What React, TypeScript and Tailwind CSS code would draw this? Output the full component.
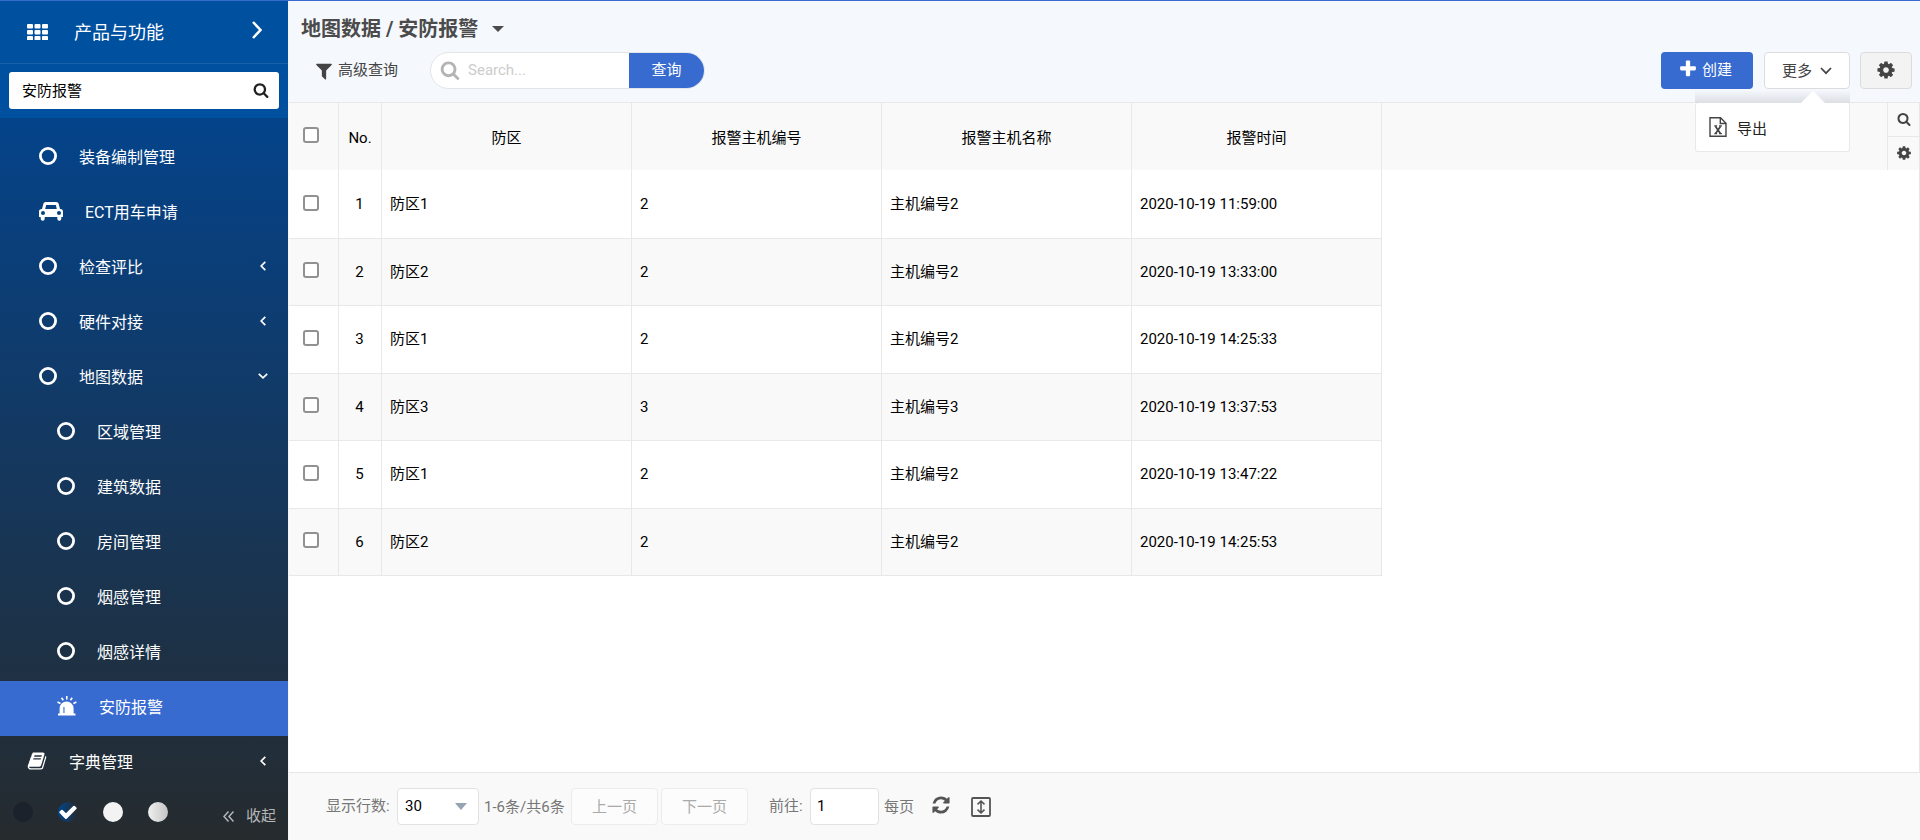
import type { ReactNode } from "react";
import { clsx } from "clsx";

type IconProps = { className?: string };

function Glyph({ d, className }: IconProps & { d: string }) {
  return (
    <svg viewBox="0 0 1792 1792" fill="currentColor" aria-hidden="true" className={className}>
      <path fillRule="evenodd" d={d} />
    </svg>
  );
}

const SEARCH =
  "M1216 832q0-185-131.5-316.5t-316.5-131.5-316.5 131.5-131.5 316.5 131.5 316.5 316.5 131.5 316.5-131.5 131.5-316.5zm512 832q0 52-38 90t-90 38q-54 0-90-38l-343-342q-179 124-399 124-143 0-273.5-55.5t-225-150-150-225-55.5-273.5 55.5-273.5 150-225 225-150 273.5-55.5 273.5 55.5 225 150 150 225 55.5 273.5q0 220-124 399l343 343q37 37 37 90z";
const COG =
  "M1152 896q0-106-75-181t-181-75-181 75-75 181 75 181 181 75 181-75 75-181zm512-109v222q0 12-8 23t-20 13l-185 28q-19 54-39 91 35 50 107 138 10 12 10 25t-9 23q-27 37-99 108t-94 71q-12 0-26-9l-138-108q-44 23-91 38-16 136-29 186-7 28-36 28h-222q-14 0-24.5-8.5t-11.5-21.5l-28-184q-49-16-90-37l-141 107q-10 9-25 9-14 0-25-11-126-114-165-168-7-10-7-23 0-12 8-23 15-21 51-66.5t54-70.5q-27-50-41-99l-183-27q-13-2-21-12.5t-8-23.5v-222q0-12 8-23t19-13l186-28q14-46 39-92-40-57-107-138-10-12-10-24 0-10 9-23 26-36 98.5-107.5t94.5-71.5q13 0 26 10l138 107q44-23 91-38 16-136 29-186 7-28 36-28h222q14 0 24.5 8.5t11.5 21.5l28 184q49 16 90 37l142-107q9-9 24-9 13 0 25 10 129 119 165 170 7 8 7 22 0 12-8 23-15 21-51 66.5t-54 70.5q26 50 41 98l183 28q13 2 21 12.5t8 23.5z";
const REFRESH =
  "M1639 1056q0 5-1 7-64 268-268 434.5t-478 166.5q-146 0-282.5-55t-243.5-157l-129 129q-19 19-45 19t-45-19-19-45v-448q0-26 19-45t45-19h448q26 0 45 19t19 45-19 45l-137 137q71 66 161 102t187 36q134 0 250-65t186-179q11-17 53-117 8-23 30-23h192q13 0 22.5 9.5t9.5 22.5zm25-800v448q0 26-19 45t-45 19h-448q-26 0-45-19t-19-45 19-45l138-138q-148-137-349-137-134 0-250 65t-186 179q-11 17-53 117-8 23-30 23h-199q-13 0-22.5-9.5t-9.5-22.5v-7q65-268 270-434.5t480-166.5q146 0 284 55.5t245 156.5l130-129q19-19 45-19t45 19 19 45z";
const FILTER =
  "M1595 295q17 41-14 70l-493 493v742q0 42-39 59-13 5-25 5-27 0-45-19l-256-256q-19-19-19-45v-486l-493-493q-31-29-14-70 17-39 59-39h1280q42 0 59 39z";
const PLUS =
  "M1600 736v192q0 40-28 68t-68 28h-416v416q0 40-28 68t-68 28h-192q-40 0-68-28t-28-68v-416h-416q-40 0-68-28t-28-68v-192q0-40 28-68t68-28h416v-416q0-40 28-68t68-28h192q40 0 68 28t28 68v416h416q40 0 68 28t28 68z";
const BOOK =
  "M1703 478q40 57 18 129l-275 906q-19 64-76.5 107.5t-122.5 43.5h-923q-77 0-148.5-53.5t-99.5-131.5q-24-67-2-127 0-4 3-27t4-37q1-8-3-21.5t-3-19.5q2-11 8-21t16.5-23.5 16.5-23.5q23-38 45-91.5t30-91.5q3-10 .5-30t-.5-28q3-11 17-28t17-23q21-36 42-92t25-90q1-9-2.5-32t.5-28q4-13 22-30.5t22-22.5q19-26 42.5-84.5t27.5-96.5q1-8-3-25.5t-2-26.5q2-8 9-18t18-23 17-21q8-12 16.5-30.5t15-35 16-36 19.5-32 26.5-23.5 36-11.5 47.5 5.5l-1 3q38-9 51-9h761q74 0 114 56t18 130l-274 906q-36 119-71.5 153.5t-128.5 34.5h-869q-27 0-38 15-11 16-1 43 24 70 144 70h923q29 0 56-15.5t35-41.5l300-987q7-22 5-57 38 15 59 43zm-1064 2q-4 13 2 22.5t20 9.5h608q13 0 25.5-9.5t16.5-22.5l21-64q4-13-2-22.5t-20-9.5h-608q-13 0-25.5 9.5t-16.5 22.5zm-83 256q-4 13 2 22.5t20 9.5h608q13 0 25.5-9.5t16.5-22.5l21-64q4-13-2-22.5t-20-9.5h-608q-13 0-25.5 9.5t-16.5 22.5z";
const CHECK =
  "M1671 566q0 40-28 68l-724 724-136 136q-28 28-68 28t-68-28l-136-136-362-362q-28-28-28-68t28-68l136-136q28-28 68-28t68 28l294 295 656-657q28-28 68-28t68 28l136 136q28 28 28 68z";

function GridIcon() {
  return (
    <svg viewBox="0 0 21 16" fill="currentColor" aria-hidden="true" className="h-4 w-[21px]">
      {[0, 6, 12].map((y) =>
        [0, 7.5, 15].map((x) => <rect key={`${x}-${y}`} x={x} y={y} width="6" height="4.4" rx="1" />)
      )}
    </svg>
  );
}

function RingIcon() {
  return (
    <svg viewBox="0 0 18 18" fill="none" stroke="currentColor" strokeWidth="2.8" aria-hidden="true" className="size-[18px]">
      <circle cx="9" cy="9" r="7.6" />
    </svg>
  );
}

function CarIcon() {
  return (
    <svg viewBox="0 0 24 19" fill="currentColor" aria-hidden="true" className="h-[19px] w-6">
      <path
        fillRule="evenodd"
        d="M6.8 0h10.4c1.3 0 2.2.8 2.5 2l1.3 5h.4C23 7 24 8.2 24 9.6v4.8c0 .4-.2.6-.6.6h-1.1v1.7a2 2 0 0 1-4 0V15H5.7v1.7a2 2 0 0 1-4 0V15H.6c-.4 0-.6-.2-.6-.6V9.6C0 8.2 1 7 2.6 7H3l1.3-5C4.6.8 5.5 0 6.8 0zM6.2 7h11.6l-.9-3.7c-.1-.3-.2-.4-.5-.4H7.6c-.3 0-.4.1-.5.4zM4 9.1a2 2 0 1 0 0 4 2 2 0 0 0 0-4zm16 0a2 2 0 1 0 0 4 2 2 0 0 0 0-4z"
      />
    </svg>
  );
}

function SirenIcon() {
  return (
    <svg viewBox="0 0 20 20" aria-hidden="true" className="size-5">
      <path
        fill="currentColor"
        fillRule="evenodd"
        d="M1 17.5h1.6V12.500a6.900 6.900 0 0 1 14 0v5H18.500V19.500H1zM6.400 17h1.100v-6H6.400z"
      />
      <path
        fill="none"
        stroke="currentColor"
        strokeWidth="1.6"
        d="M.5 6l3 1.500M4.500 1.800l1.800 2.400M9.800 0v3.600M15.200 1.800l-1.800 2.400M19.400 6l-3 1.500"
      />
    </svg>
  );
}

function ExcelIcon() {
  return (
    <svg viewBox="0 0 18 20" fill="none" stroke="currentColor" aria-hidden="true" className="h-5 w-[18px]">
      <path strokeWidth="1.4" d="M1 .8h10.500L17 6.300v12.900H1zM11.300 1v5.500H17" />
      <path strokeWidth="1.7" d="M6.400 9.200l5 7.200M11.600 9.200l-5 7.200" />
      <path strokeWidth="1.1" d="M5.300 8.900h2.800M10.100 8.900h2.800M5.300 16.600h2.800M10.100 16.600h2.800" />
    </svg>
  );
}

function FitHeightIcon() {
  return (
    <svg viewBox="0 0 20 20" fill="none" stroke="currentColor" aria-hidden="true" className="size-5">
      <rect x="1" y="1" width="18" height="18" rx="1" strokeWidth="1.8" />
      <path strokeWidth="1.6" d="M10 4.500v11M6.500 7.300L10 4l3.500 3.300M6.500 12.700L10 16l3.500-3.300" />
    </svg>
  );
}

function Stroke({ d, box, className }: IconProps & { d: string; box: string }) {
  return (
    <svg viewBox={box} fill="none" stroke="currentColor" strokeWidth="1.7" aria-hidden="true" className={className}>
      <path d={d} />
    </svg>
  );
}

const ChevronLeft = () => <Stroke box="0 0 6 10" d="M5.300 .8L1.200 5l4.100 4.200" className="h-[10px] w-[6px]" />;
const ChevronDown = () => <Stroke box="0 0 10 6" d="M.8 .8L5 4.800 9.200 .8" className="h-[6px] w-[10px]" />;

type MenuItem = { label: string; icon?: ReactNode; fold?: "closed" | "open"; level: 0 | 1 | 2; active?: boolean };

const menu: MenuItem[] = [
  { label: "装备编制管理", level: 1 },
  { label: "ECT用车申请", level: 1, icon: <CarIcon /> },
  { label: "检查评比", level: 1, fold: "closed" },
  { label: "硬件对接", level: 1, fold: "closed" },
  { label: "地图数据", level: 1, fold: "open" },
  { label: "区域管理", level: 2 },
  { label: "建筑数据", level: 2 },
  { label: "房间管理", level: 2 },
  { label: "烟感管理", level: 2 },
  { label: "烟感详情", level: 2 },
  { label: "安防报警", level: 2, icon: <SirenIcon />, active: true },
  { label: "字典管理", level: 0, fold: "closed", icon: <Glyph d={BOOK} className="size-5" /> },
];

function Sidebar() {
  return (
    <aside className="flex w-72 shrink-0 flex-col bg-[linear-gradient(#004c9a,#04438a_118px,#262b2e)] text-white">
      <div className="bg-[#0050a0]">
        <div className="flex h-[63px] items-center border-b border-[#1a61ab] pr-[26px] pl-[27px]">
          <GridIcon />
          <span className="ml-[26px] flex-1 pt-[2px] text-lg">产品与功能</span>
          <button type="button" aria-label="展开" className="pb-1">
            <svg viewBox="0 0 10 18" fill="none" stroke="currentColor" strokeWidth="2.5" className="h-[18px] w-[10px]">
              <path d="M1 1l7.500 8L1 17" />
            </svg>
          </button>
        </div>
        <div className="px-[9px] pt-2 pb-[9px]">
          <label className="flex h-[37px] items-center rounded-[3px] bg-white pr-[10px] pl-[13px] text-[#222]">
            <input
              type="text"
              aria-label="搜索菜单"
              defaultValue="安防报警"
              className="w-full min-w-0 flex-1 bg-transparent pt-[2px] text-[15px] text-black outline-none"
            />
            <Glyph d={SEARCH} className="mb-[2px] size-4" />
          </label>
        </div>
      </div>
      <nav className="flex-1 pt-[13px]">
        {menu.map((item) => (
          <a
            key={item.label}
            href="#"
            className={clsx(
              "flex h-[55px] items-center pr-[20px] pb-[2px] text-base",
              item.level === 0 && "pl-[27px]",
              item.level === 1 && "pl-[39px]",
              item.level === 2 && "pl-[57px]",
              item.active && "bg-[#386bd0]"
            )}
          >
            <span className="pb-[3px]">{item.icon ?? <RingIcon />}</span>
            <span className="ml-[22px] flex-1">{item.label}</span>
            {item.fold && (
              <span className="flex w-[10px] justify-center pb-1">
                {item.fold === "open" ? <ChevronDown /> : <ChevronLeft />}
              </span>
            )}
          </a>
        ))}
      </nav>
      <div className="flex h-[49px] items-center pr-3 pl-[13px]">
        <div className="flex gap-[25px] pb-2">
          <button type="button" aria-label="深色" className="size-5 rounded-full bg-[#1b222b]" />
          <button
            type="button"
            aria-label="蓝色"
            className="size-5 rounded-full bg-[linear-gradient(90deg,#00458c,#262b2e)]"
          >
            <Glyph d={CHECK} className="size-5" />
          </button>
          <button type="button" aria-label="浅色" className="size-5 rounded-full bg-[#f3f3f3]" />
          <button
            type="button"
            aria-label="灰色"
            className="size-5 rounded-full bg-[linear-gradient(90deg,#f0f0f0,#c4c4c6)]"
          />
        </div>
        <button type="button" className="ml-auto flex items-center gap-3 pt-[2px] text-[15px] text-[#b5b7b9]">
          <svg viewBox="0 0 11 11" fill="none" stroke="currentColor" strokeWidth="1.5" className="size-[11px]">
            <path d="M5.500 .5l-4.500 5 4.500 5M10.500 .5L6 5.500l4.500 5" />
          </svg>
          收起
        </button>
      </div>
    </aside>
  );
}

function Toolbar() {
  return (
    <header className="border-b border-[#e6e8ea] bg-[#f5f9fd] pt-2 pr-2 pb-[13px] pl-3 text-[#444]">
      <h1 className="flex h-[38px] items-center pt-px text-xl font-bold text-[#4b4b4b]">
        地图数据 / 安防报警
        <button type="button" aria-label="切换页面" className="ml-[14px]">
          <svg viewBox="0 0 12 6" fill="currentColor" className="h-[6px] w-3">
            <path d="M0 0h12L6 6z" />
          </svg>
        </button>
      </h1>
      <div className="mt-[5px] flex h-[37px] items-center text-[15px]">
        <button type="button" className="ml-[13px] flex items-center gap-1">
          <Glyph d={FILTER} className="size-5" />
          高级查询
        </button>
        <form className="ml-8 flex h-[37px] w-[275px] overflow-hidden rounded-full border border-[#e2e4e6] bg-white">
          <label className="flex min-w-0 flex-1 items-center gap-2 pl-[9px] text-[#b4b4b4]">
            <Glyph d={SEARCH} className="mb-[2px] size-5 shrink-0" />
            <input
              type="text"
              aria-label="Search"
              placeholder="Search..."
              className="w-full min-w-0 outline-none placeholder:text-[#ccc]"
            />
          </label>
          <button type="button" className="w-[75px] bg-[#386bd0] text-white">
            查询
          </button>
        </form>
        <button
          type="button"
          className="ml-auto flex h-[37px] w-[92px] items-center justify-center gap-1 rounded-[4px] bg-[#386bd0] pr-1 text-white"
        >
          <Glyph d={PLUS} className="mb-[3px] size-5" />
          创建
        </button>
        <div className="relative ml-[11px]">
          <button
            type="button"
            className="flex h-[37px] w-[86px] items-center justify-center gap-2 rounded-[4px] border border-[#dcdcdc] bg-white"
          >
            <span className="pt-[2px]">更多</span>
            <Stroke box="0 0 12 8" d="M1 1l5 5.200L11 1" className="h-2 w-3" />
          </button>
          <div className="absolute top-[38px] right-0 z-10 w-[155px]">
            <div className="flex justify-end bg-gradient-to-t from-[#dbdfe3] to-[#f5f9fd] pr-[25px]">
              <svg viewBox="0 0 24 13" className="h-[13px] w-6">
                <path d="M0 13L12 1l12 12z" fill="#fff" />
              </svg>
            </div>
            <ul className="rounded-[3px] border border-t-0 border-[#e9e9e9] bg-white">
              <li>
                <button type="button" className="flex h-[48px] w-full items-center gap-[10px] pl-[13px] text-[#444]">
                  <ExcelIcon />
                  <span className="pt-1 text-[#222]">导出</span>
                </button>
              </li>
            </ul>
          </div>
        </div>
        <button
          type="button"
          aria-label="设置"
          className="ml-[10px] flex h-[37px] w-[52px] items-center justify-center rounded-[4px] border border-[#dcdcdc] bg-[#f3f3f3]"
        >
          <Glyph d={COG} className="mb-px size-5" />
        </button>
      </div>
    </header>
  );
}

const rows = [
  ["防区1", "2", "主机编号2", "2020-10-19 11:59:00"],
  ["防区2", "2", "主机编号2", "2020-10-19 13:33:00"],
  ["防区1", "2", "主机编号2", "2020-10-19 14:25:33"],
  ["防区3", "3", "主机编号3", "2020-10-19 13:37:53"],
  ["防区1", "2", "主机编号2", "2020-10-19 13:47:22"],
  ["防区2", "2", "主机编号2", "2020-10-19 14:25:53"],
];

function Checkbox({ label }: { label: string }) {
  return (
    <input
      type="checkbox"
      aria-label={label}
      className="mb-[3px] block size-4 appearance-none rounded-[3px] border-2 border-[#919191] bg-white"
    />
  );
}

function DataTable() {
  return (
    <div className="flex flex-1 items-start border-r border-[#e6e6e6] bg-[linear-gradient(#f9f9f9_67px,#fff_67px)]">
      <table className="h-[473px] table-fixed border-separate border-spacing-0 text-[15px] text-black">
        <colgroup>
          <col className="w-[50px]" />
          <col className="w-[43px]" />
          <col className="w-[250px]" />
          <col className="w-[250px]" />
          <col className="w-[250px]" />
          <col className="w-[250px]" />
        </colgroup>
        <thead>
          <tr className="h-[68px]">
            <th className="border-r border-b border-r-[#e8e8e8] border-b-white pl-[14px]">
              <Checkbox label="全选" />
            </th>
            {["No.", "防区", "报警主机编号", "报警主机名称", "报警时间"].map((name) => (
              <th key={name} className="border-r border-b border-r-[#e8e8e8] border-b-white pt-1 font-normal">
                {name}
              </th>
            ))}
          </tr>
        </thead>
        <tbody>
          {rows.map((row, i) => (
            <tr key={i} className="h-[67px] odd:bg-white even:bg-[#f9f9f9]">
              <td className="border-r border-b border-[#e8e8e8] pl-[14px]">
                <Checkbox label={`选择第${i + 1}行`} />
              </td>
              <td className="border-r border-b border-[#e8e8e8] pr-px text-center">{i + 1}</td>
              {row.map((cell, j) => (
                <td key={j} className="border-r border-b border-[#e8e8e8] px-2">
                  {cell}
                </td>
              ))}
            </tr>
          ))}
        </tbody>
      </table>
      <div className="ml-auto flex h-[67px] w-8 flex-col border-l border-[#e8e8e8] text-[#444]">
        <button type="button" aria-label="搜索" className="flex h-[34px] items-center justify-center border-b border-[#e8e8e8] pb-px">
          <Glyph d={SEARCH} className="size-[14px]" />
        </button>
        <button type="button" aria-label="列设置" className="flex h-[33px] items-center justify-center pb-px">
          <Glyph d={COG} className="size-4" />
        </button>
      </div>
    </div>
  );
}

function Pager() {
  return (
    <footer className="flex h-[68px] items-center border-t border-[#e6e6e6] bg-[#f9f9f9] pb-px pl-[37px] text-[15px] text-[#777]">
      <label htmlFor="page-size" className="w-[71px]">
        显示行数:
      </label>
      <div className="relative">
        <select
          id="page-size"
          defaultValue="30"
          className="h-[37px] w-[82px] appearance-none rounded-[4px] border border-[#e2e2e2] bg-white pl-[7px] text-black"
        >
          <option>30</option>
          <option>50</option>
        </select>
        <svg viewBox="0 0 12 7" fill="#95a3b3" className="pointer-events-none absolute top-[15px] right-3 h-[7px] w-3">
          <path d="M0 0h12L6 7z" />
        </svg>
      </div>
      <span className="ml-[5px] w-[87px] pt-[2px]">1-6条/共6条</span>
      <button type="button" className="h-[37px] w-[87px] rounded-[4px] border border-[#ececec] bg-[#fcfcfc] pt-[2px] text-[#aaa]">
        上一页
      </button>
      <button
        type="button"
        className="ml-[3px] h-[37px] w-[87px] rounded-[4px] border border-[#ececec] bg-[#fcfcfc] pt-[2px] text-[#aaa]"
      >
        下一页
      </button>
      <label htmlFor="page-no" className="ml-[21px] w-[41px]">
        前往:
      </label>
      <input
        id="page-no"
        type="text"
        defaultValue="1"
        className="h-[37px] w-[69px] rounded-[4px] border border-[#e2e2e2] bg-white pl-[6px] text-black"
      />
      <span className="ml-[5px] pt-[2px]">每页</span>
      <button type="button" aria-label="刷新" className="ml-[17px] text-[#555]">
        <Glyph d={REFRESH} className="mb-[2px] size-5" />
      </button>
      <button type="button" aria-label="自适应高度" className="ml-5 pt-px text-[#555]">
        <FitHeightIcon />
      </button>
    </footer>
  );
}

export default function App() {
  return (
    <div className="flex min-h-screen flex-col border-t border-[#386bd0] bg-white font-[Roboto,'Noto_Sans_CJK_SC',sans-serif]">
      <div className="flex flex-1">
        <Sidebar />
        <main className="flex min-w-0 flex-1 flex-col border-l border-[#f5f5f5]">
          <Toolbar />
          <DataTable />
          <Pager />
        </main>
      </div>
    </div>
  );
}
